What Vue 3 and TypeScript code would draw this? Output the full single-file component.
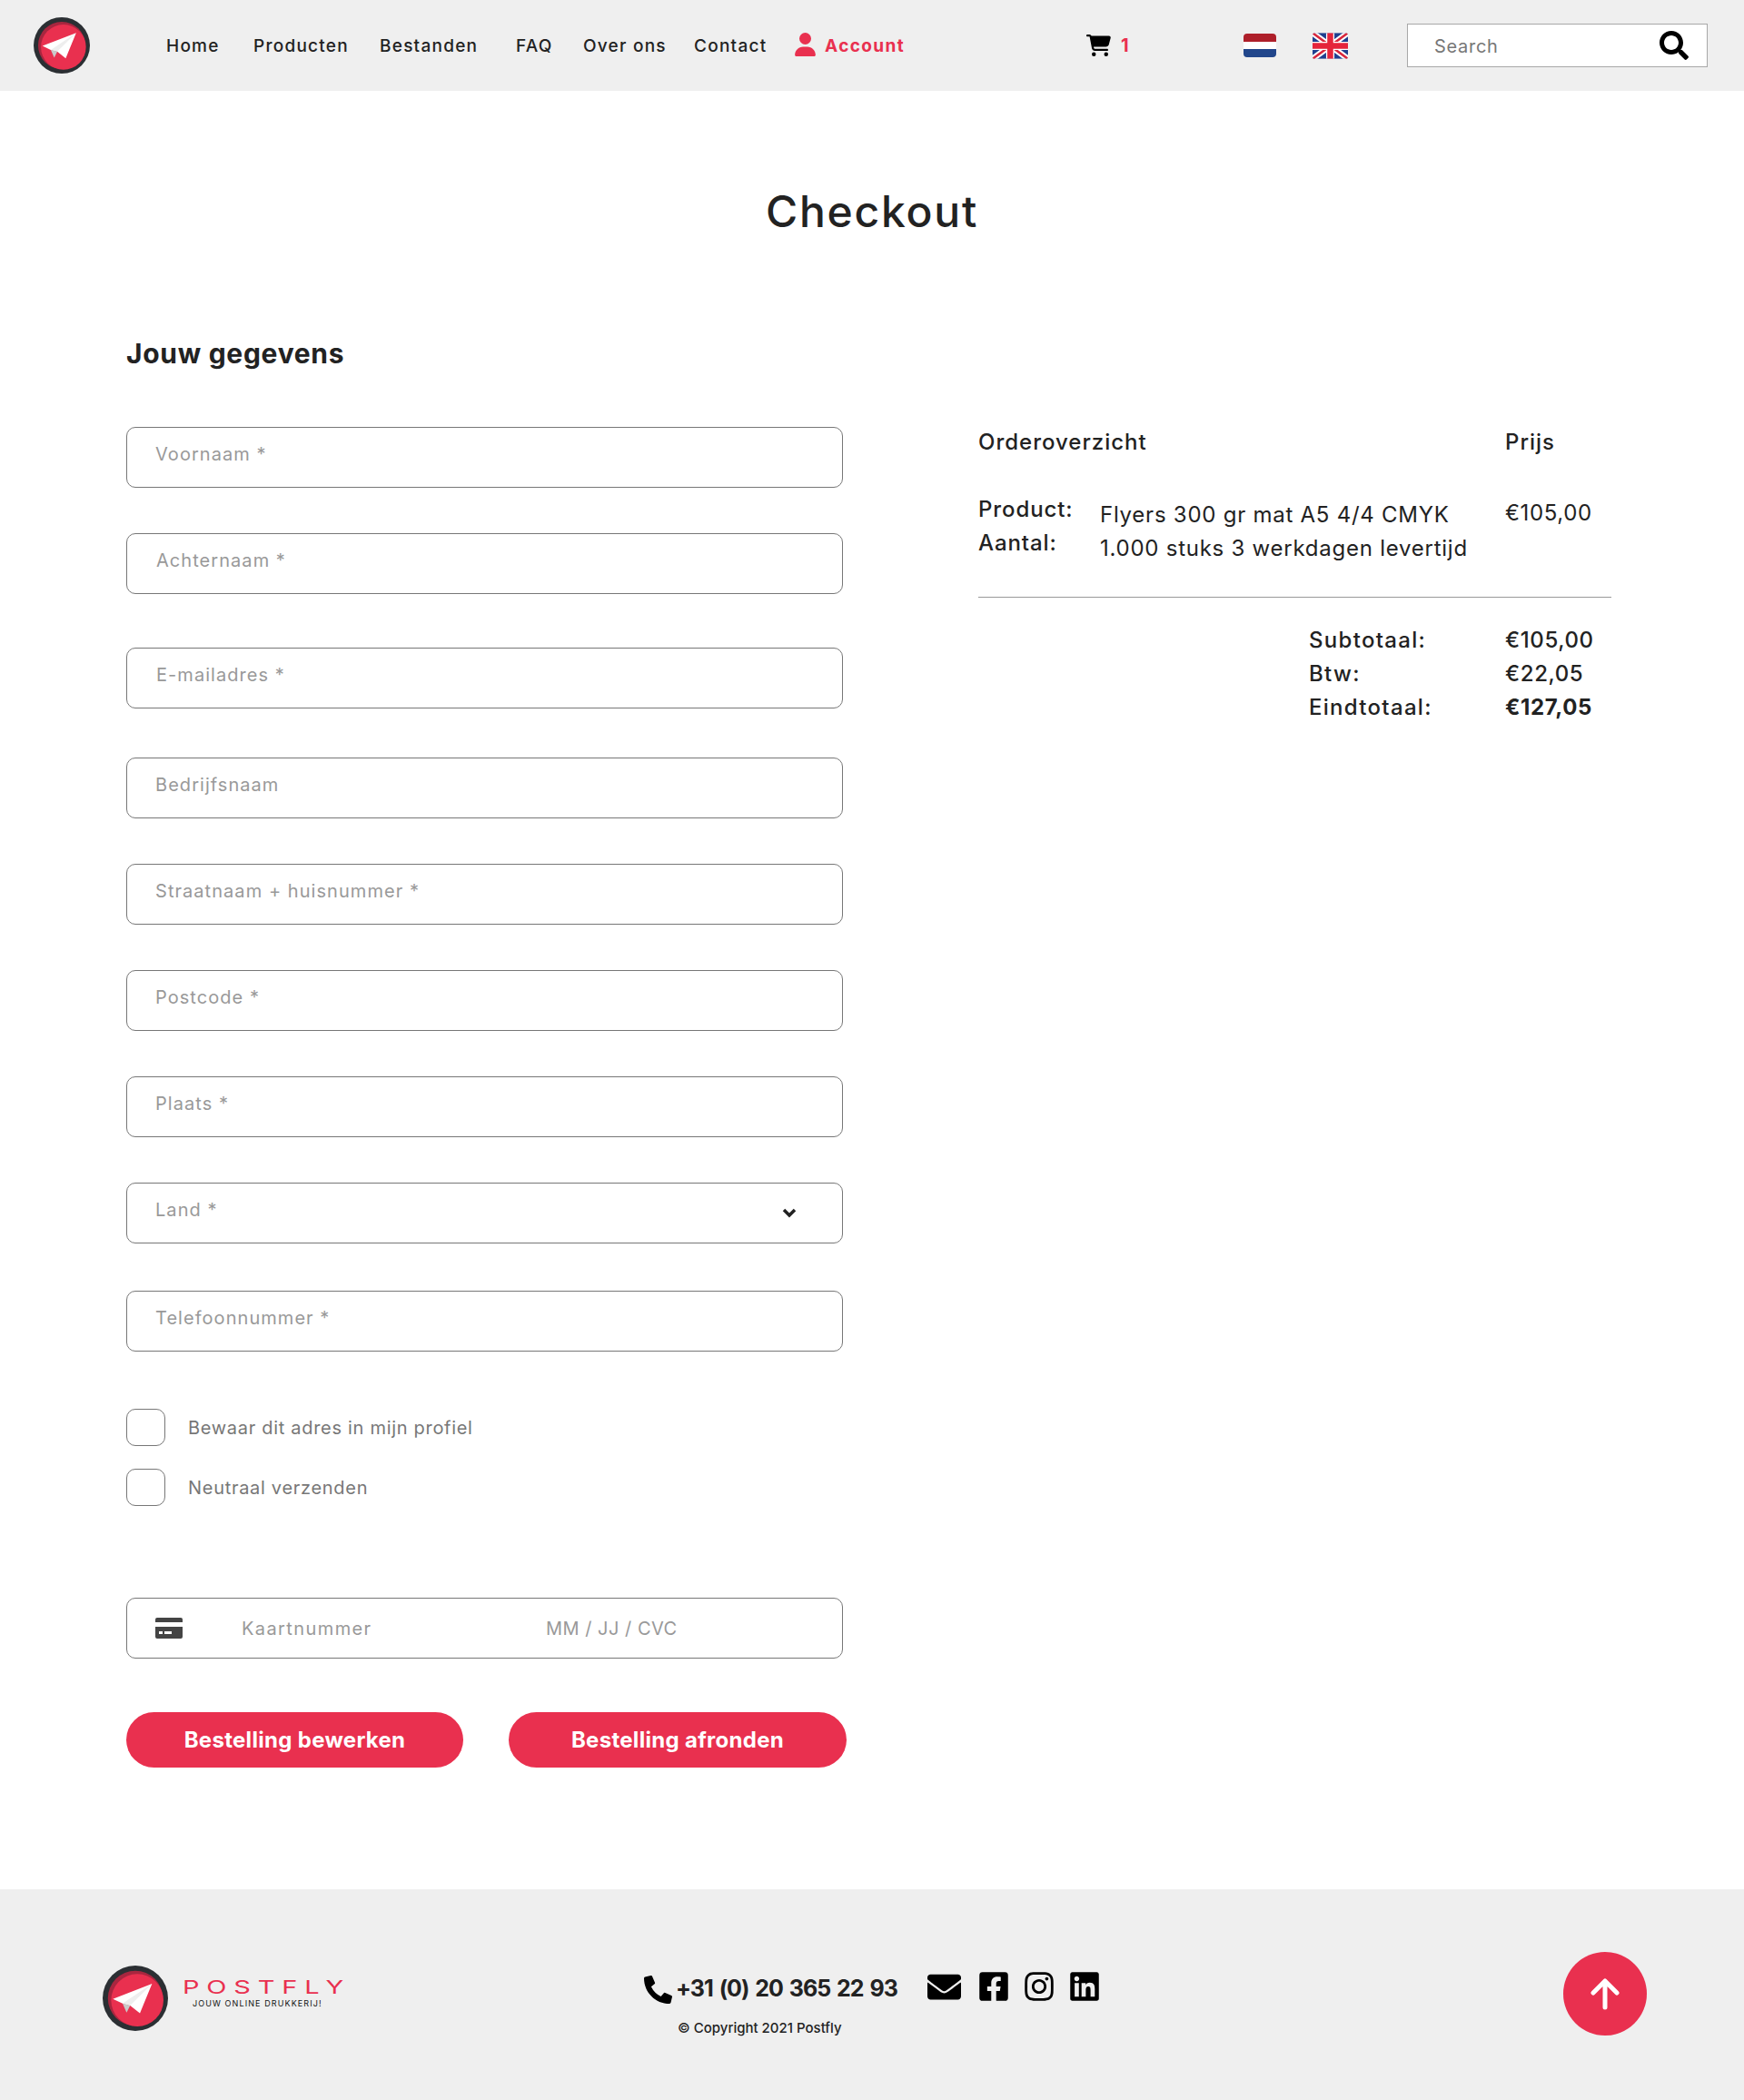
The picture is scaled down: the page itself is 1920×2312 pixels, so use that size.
<template>
  <div class="page">
    <header class="topbar">
      <svg class="logo" viewBox="0 0 100 100" aria-label="Postfly">
        <circle cx="50" cy="50" r="50" fill="#2b2f33" />
        <circle cx="50" cy="50" r="42" fill="#a8263f" />
        <circle cx="53" cy="53" r="40" fill="#e9304f" />
        <polygon points="75.5,27.8 15.7,51 30.5,58 42,61 57,73" fill="#ffffff" />
        <polygon points="75.5,27.8 30.5,58 42,61" fill="#eeeeee" />
        <polygon points="30.5,58 36.6,71.8 42,61" fill="#c9c9c9" />
      </svg>

      <nav class="nav">
        <a v-for="item in navItems" :key="item" class="nav-link">{{ item }}</a>
        <a class="nav-link account">
          <svg viewBox="0 0 448 512" class="account-icon"><path :d="icons.user" /></svg>
          Account
        </a>
      </nav>

      <div class="cart">
        <svg viewBox="0 0 576 512" class="cart-icon"><path :d="icons.cart" /></svg>
        <span class="cart-count">1</span>
      </div>

      <svg class="flag-nl" viewBox="0 0 36 26">
        <defs><clipPath id="nlclip"><rect width="36" height="26" rx="4" /></clipPath></defs>
        <g clip-path="url(#nlclip)">
          <rect width="36" height="9" fill="#ae1f2a" />
          <rect y="9" width="36" height="8" fill="#ffffff" />
          <rect y="17" width="36" height="9" fill="#21468b" />
        </g>
      </svg>

      <svg class="flag-uk" viewBox="0 0 60 44">
        <defs><clipPath id="ukclip"><rect width="60" height="44" rx="4" /></clipPath></defs>
        <g clip-path="url(#ukclip)">
          <rect width="60" height="44" fill="#1f3f8f" />
          <path d="M0 0L60 44M60 0L0 44" stroke="#fff" stroke-width="10" />
          <path d="M0 0L60 44M60 0L0 44" stroke="#d8263c" stroke-width="4" />
          <path d="M30 0V44M0 22H60" stroke="#fff" stroke-width="14" />
          <path d="M30 0V44M0 22H60" stroke="#e5243b" stroke-width="10" />
        </g>
      </svg>

      <div class="search">
        <input class="search-input" type="text" placeholder="Search" />
        <svg viewBox="0 0 512 512" class="search-icon"><path :d="icons.search" /></svg>
      </div>
    </header>

    <main class="content">
      <h1 class="title">Checkout</h1>
      <h2 class="subtitle">Jouw gegevens</h2>

      <div class="columns">
        <form class="form" @submit.prevent>
          <template v-for="field in fields" :key="field.label">
            <div v-if="field.select" class="select-wrap" :style="{ marginTop: field.gap + 'px' }">
              <select class="field select">
                <option>{{ field.label }}</option>
              </select>
              <svg class="chevron" viewBox="0 0 16 11"><path d="M2 2l6 6 6-6" /></svg>
            </div>
            <input
              v-else
              :class="['field', { shifted: field.shifted }]"
              type="text"
              :placeholder="field.label"
              :style="{ marginTop: field.gap + 'px' }"
            />
          </template>

          <label class="check first">
            <input type="checkbox" class="check-box" />
            <span>Bewaar dit adres in mijn profiel</span>
          </label>
          <label class="check second">
            <input type="checkbox" class="check-box" />
            <span>Neutraal verzenden</span>
          </label>

          <div class="card-row">
            <svg class="card-icon" viewBox="0 0 30 23">
              <path d="M2 0h26a2 2 0 0 1 2 2v3H0V2a2 2 0 0 1 2-2z" />
              <path fill-rule="evenodd" d="M0 10h30v11a2 2 0 0 1-2 2H2a2 2 0 0 1-2-2zM4 15v3h4v-3zM10 15v3h8v-3z" />
            </svg>
            <span class="card-number">Kaartnummer</span>
            <span class="card-date">MM / JJ / CVC</span>
          </div>

          <div class="buttons">
            <button class="btn" type="button">Bestelling bewerken</button>
            <button class="btn wide" type="submit">Bestelling afronden</button>
          </div>
        </form>

        <aside class="summary">
          <div class="summary-head">
            <span>Orderoverzicht</span>
            <span>Prijs</span>
          </div>
          <div class="summary-item">
            <div class="item-labels">
              <div>Product:</div>
              <div>Aantal:</div>
            </div>
            <div class="item-details">
              <div>Flyers 300 gr mat A5 4/4 CMYK</div>
              <div>1.000 stuks 3 werkdagen levertijd</div>
            </div>
            <div class="item-price">€105,00</div>
          </div>
          <hr class="divider" />
          <div class="totals">
            <template v-for="row in totals" :key="row.label">
              <span class="total-label">{{ row.label }}</span>
              <span :class="{ strong: row.strong }">{{ row.value }}</span>
            </template>
          </div>
        </aside>
      </div>
    </main>

    <footer class="footer">
      <div class="brand">
        <svg class="brand-logo" viewBox="0 0 100 100">
          <circle cx="50" cy="50" r="50" fill="#2b2f33" />
          <circle cx="50" cy="50" r="42" fill="#a8263f" />
          <circle cx="53" cy="53" r="40" fill="#e9304f" />
          <polygon points="75.5,27.8 15.7,51 30.5,58 42,61 57,73" fill="#ffffff" />
          <polygon points="75.5,27.8 30.5,58 42,61" fill="#eeeeee" />
          <polygon points="30.5,58 36.6,71.8 42,61" fill="#c9c9c9" />
        </svg>
        <div class="brand-text">
          <div class="brand-name">POSTFLY</div>
          <div class="brand-tag">JOUW ONLINE DRUKKERIJ!</div>
        </div>
      </div>

      <div class="contact">
        <div class="contact-row">
          <svg viewBox="0 0 512 512" class="phone-icon"><path :d="icons.phone" /></svg>
          <span class="phone">+31 (0) 20 365 22 93</span>
          <svg viewBox="0 0 512 512" class="social mail"><path :d="icons.mail" /></svg>
          <svg viewBox="0 0 448 512" class="social fb"><path :d="icons.facebook" /></svg>
          <svg viewBox="0 0 448 512" class="social ig"><path :d="icons.instagram" /></svg>
          <svg viewBox="0 0 448 512" class="social li"><path :d="icons.linkedin" /></svg>
        </div>
        <div class="copyright">© Copyright 2021 Postfly</div>
      </div>

      <button class="to-top" type="button" aria-label="Naar boven">
        <svg viewBox="0 0 36 36"><path d="M18 33V4M5 17L18 4l13 13" /></svg>
      </button>
    </footer>
  </div>
</template>

<script setup lang="ts">
const navItems = ['Home', 'Producten', 'Bestanden', 'FAQ', 'Over ons', 'Contact']

interface Field {
  label: string
  gap: number
  select?: boolean
  shifted?: boolean
}

// gaps differ per field in the original form
const fields: Field[] = [
  { label: 'Voornaam *', gap: 0 },
  { label: 'Achternaam *', gap: 50, shifted: true },
  { label: 'E-mailadres *', gap: 59, shifted: true },
  { label: 'Bedrijfsnaam', gap: 54 },
  { label: 'Straatnaam + huisnummer *', gap: 50 },
  { label: 'Postcode *', gap: 50 },
  { label: 'Plaats *', gap: 50 },
  { label: 'Land *', gap: 50, select: true },
  { label: 'Telefoonnummer *', gap: 52 },
]

const totals = [
  { label: 'Subtotaal:', value: '€105,00', strong: false },
  { label: 'Btw:', value: '€22,05', strong: false },
  { label: 'Eindtotaal:', value: '€127,05', strong: true },
]

const icons = {
  user: 'M224 256A128 128 0 1 0 224 0a128 128 0 1 0 0 256zm-45.7 48C79.8 304 0 383.8 0 482.3C0 498.7 13.3 512 29.7 512H418.3c16.4 0 29.7-13.3 29.7-29.7C448 383.8 368.2 304 269.7 304H178.3z',
  cart: 'M0 24C0 10.7 10.7 0 24 0H69.5c22 0 41.5 12.8 50.6 32h411c26.3 0 45.5 25 38.6 50.4l-41 152.3c-8.5 31.4-37 53.3-69.5 53.3H170.7l5.4 28.5c2.2 11.3 12.1 19.5 23.6 19.5H488c13.3 0 24 10.7 24 24s-10.7 24-24 24H199.7c-34.6 0-64.3-24.6-70.7-58.5L77.4 54.5c-.7-3.8-4-6.5-7.9-6.5H24C10.7 48 0 37.3 0 24zM128 464a48 48 0 1 1 96 0 48 48 0 1 1 -96 0zm336-48a48 48 0 1 1 0 96 48 48 0 1 1 0-96z',
  search: 'M505 442.7L405.3 343c-4.5-4.5-10.6-7-17-7H372c27.6-35.3 44-79.7 44-128C416 93.1 322.9 0 208 0S0 93.1 0 208s93.1 208 208 208c48.3 0 92.7-16.4 128-44v16.3c0 6.4 2.5 12.5 7 17l99.7 99.7c9.4 9.4 24.6 9.4 33.9 0l28.3-28.3c9.4-9.4 9.4-24.6.1-34zM208 336c-70.7 0-128-57.2-128-128 0-70.7 57.2-128 128-128 70.7 0 128 57.2 128 128 0 70.7-57.2 128-128 128z',
  phone: 'M497.39 361.8l-112-48a24 24 0 0 0-28 6.9l-49.6 60.6A370.66 370.66 0 0 1 130.6 204.11l60.6-49.6a23.94 23.94 0 0 0 6.9-28l-48-112A24.16 24.16 0 0 0 122.6.61l-104 24A24 24 0 0 0 0 48c0 256.5 207.9 464 464 464a24 24 0 0 0 23.4-18.6l24-104a24.29 24.29 0 0 0-14.01-27.6z',
  mail: 'M502.3 190.8c3.9-3.1 9.7-.2 9.7 4.7V400c0 26.5-21.5 48-48 48H48c-26.5 0-48-21.5-48-48V195.6c0-5 5.7-7.8 9.7-4.7 22.4 17.4 52.1 39.5 154.1 113.6 21.1 15.4 56.7 47.8 92.2 47.6 35.7.3 72-32.8 92.3-47.6 102-74.1 131.6-96.3 154-113.7zM256 320c23.2.4 56.6-29.2 73.4-41.4 132.7-96.3 142.8-104.7 173.4-128.7 5.8-4.5 9.2-11.5 9.2-18.9v-19c0-26.5-21.5-48-48-48H48C21.5 64 0 85.5 0 112v19c0 7.4 3.4 14.3 9.2 18.9 30.6 23.9 40.7 32.4 173.4 128.7 16.8 12.2 50.2 41.8 73.4 41.4z',
  facebook: 'M400 32H48A48 48 0 0 0 0 80v352a48 48 0 0 0 48 48h137.25V327.69h-63V256h63v-54.64c0-62.15 37-96.48 93.67-96.48 27.14 0 55.52 4.84 55.52 4.84v61h-31.27c-30.81 0-40.42 19.12-40.42 38.73V256h68.78l-11 71.69h-57.78V480H400a48 48 0 0 0 48-48V80a48 48 0 0 0-48-48z',
  instagram: 'M224.1 141c-63.6 0-114.9 51.3-114.9 114.9s51.3 114.9 114.9 114.9S339 319.5 339 255.9 287.7 141 224.1 141zm0 189.6c-41.1 0-74.7-33.5-74.7-74.7s33.5-74.7 74.7-74.7 74.7 33.5 74.7 74.7-33.6 74.7-74.7 74.7zm146.4-194.3c0 14.9-12 26.8-26.8 26.8-14.9 0-26.8-12-26.8-26.8s12-26.8 26.8-26.8 26.8 12 26.8 26.8zm76.1 27.2c-1.7-35.9-9.9-67.7-36.2-93.9-26.2-26.2-58-34.4-93.9-36.2-37-2.1-147.9-2.1-184.9 0-35.8 1.7-67.6 9.9-93.9 36.1s-34.4 58-36.2 93.9c-2.1 37-2.1 147.9 0 184.9 1.7 35.9 9.9 67.7 36.2 93.9s58 34.4 93.9 36.2c37 2.1 147.9 2.1 184.9 0 35.9-1.7 67.7-9.9 93.9-36.2 26.2-26.2 34.4-58 36.2-93.9 2.1-37 2.1-147.8 0-184.8zM398.8 388c-7.8 19.6-22.9 34.7-42.6 42.6-29.5 11.7-99.5 9-132.1 9s-102.7 2.6-132.1-9c-19.6-7.8-34.7-22.9-42.6-42.6-11.7-29.5-9-99.5-9-132.1s-2.6-102.7 9-132.1c7.8-19.6 22.9-34.7 42.6-42.6 29.5-11.7 99.5-9 132.1-9s102.7-2.6 132.1 9c19.6 7.8 34.7 22.9 42.6 42.6 11.7 29.5 9 99.5 9 132.1s2.7 102.7-9 132.1z',
  linkedin: 'M416 32H31.9C14.3 32 0 46.5 0 64.3v383.4C0 465.5 14.3 480 31.9 480H416c17.6 0 32-14.5 32-32.3V64.3c0-17.8-14.4-32.3-32-32.3zM135.4 416H69V202.2h66.5V416zm-33.2-243c-21.3 0-38.5-17.3-38.5-38.5S80.9 96 102.2 96c21.2 0 38.5 17.3 38.5 38.5 0 21.3-17.2 38.5-38.5 38.5zm282.1 243h-66.4V312c0-24.8-.5-56.7-34.5-56.7-34.6 0-39.9 27-39.9 54.9V416h-66.4V202.2h63.7v29.2h.9c8.9-16.8 30.6-34.5 62.9-34.5 67.2 0 79.7 44.3 79.7 101.9V416z',
}
</script>

<style>
html,
body {
  margin: 0;
  background: #fff;
}
</style>

<style scoped>
.page {
  width: 1920px;
  min-height: 2312px;
  font-family: Inter, "Noto Sans", sans-serif;
  color: #222;
  display: flex;
  flex-direction: column;
}

/* top bar */
.topbar {
  height: 100px;
  background: #efefef;
  box-sizing: border-box;
  padding-left: 37px;
  display: grid;
  grid-template-columns: 146px 1013px 173px 76px 104px 331px;
  align-items: center;
}
.logo {
  width: 62px;
  height: 62px;
}
.nav {
  display: grid;
  grid-template-columns: 96px 139px 150px 74px 122px 111px auto;
  align-items: center;
}
.nav-link {
  font-size: 19px;
  font-weight: 500;
  letter-spacing: 1.25px;
  color: #222;
  white-space: nowrap;
}
.account {
  display: flex;
  align-items: center;
  gap: 10px;
  color: #e9304f;
  font-weight: 700;
  letter-spacing: 1.4px;
}
.account-icon {
  width: 23px;
  height: 26px;
  fill: #e9304f;
  margin-top: -3px;
}
.cart {
  display: flex;
  align-items: center;
  gap: 11px;
}
.cart-icon {
  width: 27px;
  height: 24px;
  fill: #000;
}
.cart-count {
  color: #e9304f;
  font-size: 20px;
  font-weight: 700;
}
.flag-nl {
  width: 36px;
  height: 26px;
}
.flag-uk {
  width: 39px;
  height: 29px;
}
.search {
  height: 48px;
  box-sizing: border-box;
  background: #fff;
  border: 1px solid #a8a8a8;
  display: flex;
  align-items: center;
  padding: 0 20px 0 29px;
}
.search-input {
  flex: 1;
  min-width: 0;
  height: 30px;
  margin-top: 1px;
  border: 0;
  outline: 0;
  padding: 0;
  font: 400 20px Inter, "Noto Sans", sans-serif;
  letter-spacing: 0.7px;
}
.search-input::placeholder {
  color: #777;
  opacity: 1;
}
.search-icon {
  width: 32px;
  height: 32px;
  fill: #000;
}

/* main */
.content {
  flex: 1;
  padding: 0 139px;
}
.title {
  margin: 97px 0 0;
  font-size: 48px;
  line-height: 72px;
  font-weight: 500;
  text-align: center;
  letter-spacing: 1.75px;
}
.subtitle {
  margin: 98px 0 0;
  font-size: 30px;
  line-height: 45px;
  font-weight: 700;
  letter-spacing: 0.7px;
}
.columns {
  display: flex;
  margin-top: 58px;
}
.form {
  width: 789px;
  flex: none;
  display: flex;
  flex-direction: column;
}
.field {
  display: block;
  width: 100%;
  height: 67px;
  box-sizing: border-box;
  background: #fff;
  border: 1px solid #777;
  border-radius: 10px;
  padding: 0 32px 8px 31px;
  outline: 0;
  font: 400 20px Inter, "Noto Sans", sans-serif;
  letter-spacing: 1.05px;
  color: #999;
}
.field.shifted {
  padding-left: 32px;
}
.field::placeholder {
  color: #999;
  opacity: 1;
}
.select {
  appearance: none;
}
.select-wrap {
  position: relative;
}
.chevron {
  position: absolute;
  left: 722px;
  top: 28px;
  width: 16px;
  height: 11px;
  fill: none;
  stroke: #222;
  stroke-width: 3.5;
}
.check {
  display: flex;
  align-items: center;
  gap: 25px;
  font-size: 20px;
  letter-spacing: 0.7px;
  color: #777;
}
.check.first {
  margin-top: 63px;
}
.check.second {
  margin-top: 25px;
}
.check-box {
  appearance: none;
  width: 43px;
  height: 41px;
  margin: 0;
  background: #fff;
  border: 1px solid #777;
  border-radius: 10px;
  box-sizing: border-box;
}
.card-row {
  margin-top: 101px;
  height: 67px;
  box-sizing: border-box;
  border: 1px solid #777;
  border-radius: 10px;
  display: grid;
  grid-template-columns: 95px 335px auto;
  align-items: center;
  padding-left: 31px;
  font-size: 20px;
  color: #999;
}
.card-number {
  letter-spacing: 1.4px;
}
.card-date {
  letter-spacing: 0.5px;
}
.card-icon {
  width: 30px;
  height: 23px;
  fill: #444;
}
.buttons {
  display: flex;
  gap: 50px;
  margin-top: 59px;
  width: 793px;
}
.btn {
  width: 371px;
  height: 61px;
  border: 0;
  border-radius: 31px;
  background: #e9304f;
  color: #fff;
  font: 700 24px Inter, "Noto Sans", sans-serif;
  letter-spacing: 0.3px;
}
.btn.wide {
  width: 372px;
}

/* order summary */
.summary {
  margin-left: 149px;
  width: 697px;
  font-size: 24px;
  letter-spacing: 0.6px;
  color: #222;
}
.summary-head {
  display: grid;
  grid-template-columns: 580px auto;
  line-height: 34px;
  font-weight: 500;
  letter-spacing: 1px;
}
.summary-item {
  display: grid;
  grid-template-columns: 134px 446px auto;
  margin-top: 37.5px;
  line-height: 37px;
}
.item-labels {
  font-weight: 500;
  letter-spacing: 0.9px;
}
.item-details {
  padding-top: 6px;
  letter-spacing: 0.75px;
}
.item-price {
  padding-top: 4px;
}
.divider {
  margin: 35px 0 0;
  border: 0;
  border-top: 1px solid #999;
}
.totals {
  display: grid;
  grid-template-columns: 216px auto;
  padding-left: 364px;
  margin-top: 28.5px;
  line-height: 37px;
  font-weight: 500;
}
.total-label {
  letter-spacing: 1.3px;
}
.strong {
  font-weight: 700;
}

/* footer */
.footer {
  height: 232px;
  background: #efefef;
  box-sizing: border-box;
  padding: 69px 0 0 113px;
  display: grid;
  grid-template-columns: 596px 1011.5px 92px;
  align-items: start;
}
.brand {
  margin-top: 15px;
  display: flex;
  align-items: flex-start;
}
.brand-logo {
  width: 72px;
  height: 72px;
  flex: none;
}
.brand-text {
  margin-left: 16px;
  padding-top: 12px;
}
.brand-name {
  color: #e9304f;
  font-size: 20px;
  line-height: 24px;
  font-weight: 400;
  letter-spacing: 5.4px;
  transform: scaleX(1.45);
  transform-origin: left center;
}
.brand-tag {
  margin-left: 11px;
  font-size: 9px;
  line-height: 12px;
  letter-spacing: 1.1px;
  color: #111;
}
.contact {
  margin-top: 19px;
}
.contact-row {
  display: flex;
  align-items: center;
  height: 40px;
}
.phone-icon {
  width: 31px;
  height: 31px;
  flex: none;
  margin-top: 4px;
}
.phone {
  margin-left: 4px;
  margin-top: 2px;
  font-size: 25px;
  font-weight: 700;
  letter-spacing: -1px;
  word-spacing: 2px;
  color: #222;
  white-space: nowrap;
  width: 277px;
}
.social {
  flex: none;
  fill: #000;
  margin-top: -2px;
}
.mail {
  width: 37px;
  height: 37px;
}
.fb,
.ig,
.li {
  width: 32px;
  height: 36px;
}
.fb {
  margin-left: 20px;
}
.ig {
  margin-left: 18px;
}
.li {
  margin-left: 18px;
}
.copyright {
  margin: 13px 0 0 37px;
  font-size: 15px;
  line-height: 24px;
  font-weight: 500;
}
.to-top {
  width: 92px;
  height: 92px;
  padding: 0;
  border: 0;
  border-radius: 50%;
  background: #e9304f;
  display: flex;
  align-items: center;
  justify-content: center;
}
.to-top svg {
  width: 36px;
  height: 36px;
  fill: none;
  stroke: #fff;
  stroke-width: 5;
  stroke-linecap: round;
  stroke-linejoin: round;
}
</style>
